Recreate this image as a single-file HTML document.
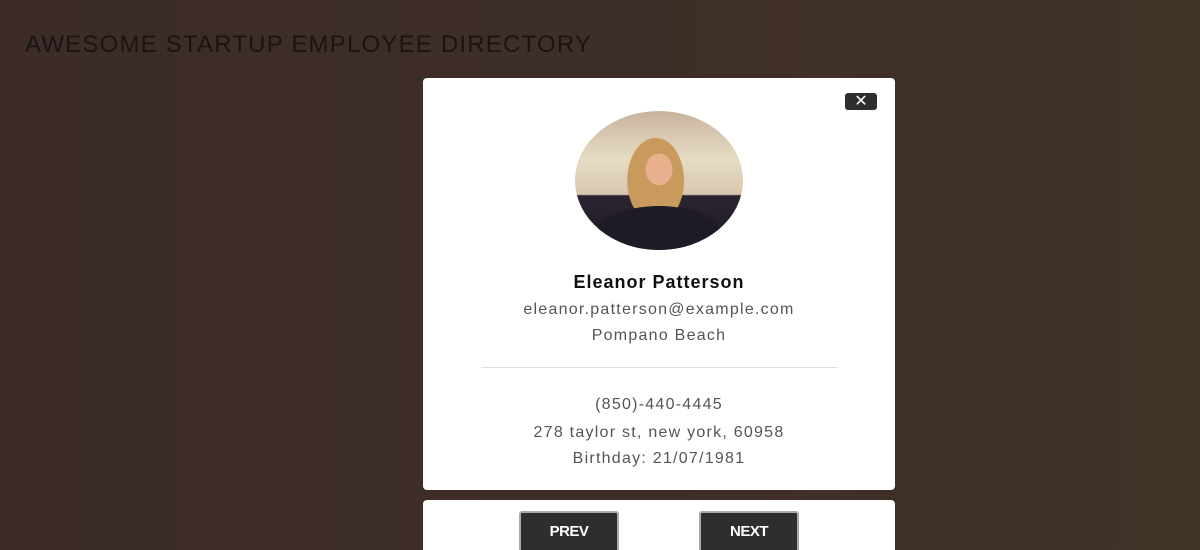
<!DOCTYPE html>
<html><head><meta charset="utf-8"><style>
html,body{margin:0;padding:0;width:1200px;height:550px;overflow:hidden}
body{background:linear-gradient(90deg,#3c2b28 0%,#3e2e29 50%,#403225 100%);font-family:"Liberation Sans",sans-serif;position:relative}
h1{position:absolute;left:25px;top:31px;margin:0;font-weight:normal;font-size:24px;color:#1a1412;letter-spacing:1.2px}
.card{position:absolute;left:423px;top:78px;width:472px;height:412px;background:#fff;border-radius:4px}
.x{position:absolute;left:422px;top:15px;width:32px;height:17px;background:#2e2e2e;border-radius:3px;color:#fff;font-size:16px;line-height:17px;text-align:center}
.ph{position:absolute;left:152px;top:33px;width:168px;height:139px;border-radius:50%;overflow:hidden;background:
radial-gradient(ellipse 22px 26px at 50% 42%,#e9b08e 60%,transparent 62%),
radial-gradient(ellipse 40px 60px at 48% 50%,#c89a5c 70%,transparent 72%),
linear-gradient(180deg,#c9b39c 0%,#e6dcc5 35%,#d9c7ad 60%,#2a2430 61%,#1d1a25 100%)}
.ph:after{content:"";position:absolute;left:20px;top:95px;width:128px;height:60px;border-radius:50% 50% 0 0;background:#1e1b26}
.t{position:absolute;left:0;width:472px;text-align:center}
.name{top:194px;font-size:18px;font-weight:bold;color:#111;letter-spacing:1px}
.s{font-size:16px;color:#555;letter-spacing:1.25px}
hr{position:absolute;left:58px;top:289px;width:356px;margin:0;border:0;border-top:1px solid #ddd}
.nav{position:absolute;left:423px;top:500px;width:472px;height:60px;background:#fff;border-radius:4px}
.b{position:absolute;top:11px;width:100px;height:42px;background:#2e2e2e;border:2px solid #aaa;border-radius:3px;color:#fff;font-weight:bold;font-size:15px;text-align:center;line-height:38px;letter-spacing:-0.5px;box-sizing:border-box}
</style></head><body>
<h1>AWESOME STARTUP EMPLOYEE DIRECTORY</h1>
<div class="card">
<div class="x">✕</div>
<div class="ph"></div>
<div class="t name">Eleanor Patterson</div>
<div class="t s" style="top:223px">eleanor.patterson@example.com</div>
<div class="t s" style="top:249px">Pompano Beach</div>
<hr>
<div class="t s" style="top:318px">(850)-440-4445</div>
<div class="t s" style="top:346px">278 taylor st, new york, 60958</div>
<div class="t s" style="top:372px">Birthday: 21/07/1981</div>
</div>
<div class="nav">
<div class="b" style="left:96px">PREV</div>
<div class="b" style="left:276px">NEXT</div>
</div>
</body></html>
